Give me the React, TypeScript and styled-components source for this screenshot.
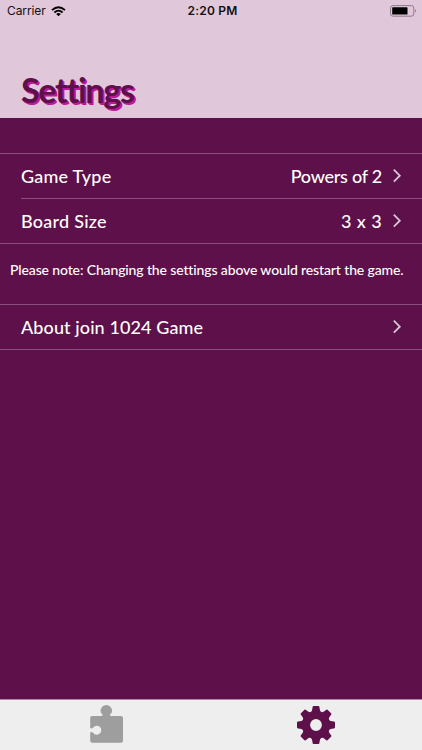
import React from "react";
import styled, { createGlobalStyle } from "styled-components";

const GlobalStyle = createGlobalStyle`
  * { box-sizing: border-box; }
  body { margin: 0; background: #5d1049; }
`;

const Screen = styled.div`
  width: 100%;
  height: 750px;
  display: flex;
  flex-direction: column;
  overflow: hidden;
  background: #5d1049;
  color: #fff;
  font-family: Lato, sans-serif;
  font-weight: 500;
`;

const Header = styled.header`
  height: 118px;
  flex: none;
  display: flex;
  flex-direction: column;
  background: #e1c7da;
`;

const StatusBar = styled.div`
  height: 22px;
  display: grid;
  grid-template-columns: 1fr auto 1fr;
  align-items: center;
  padding: 0 5px 0 7px;
  color: #111;
  font: 400 12px/22px Inter, sans-serif;
`;

const Carrier = styled.div`
  display: flex;
  align-items: center;
  gap: 5px;
  letter-spacing: -0.1px;
`;

const Clock = styled.time`
  font-weight: 600;
  letter-spacing: 0.2px;
  padding-left: 1px;
`;

const Battery = styled.div`
  display: flex;
  justify-content: flex-end;
`;

const Title = styled.h1`
  margin: 46px 0 0 21px;
  font-size: 34px;
  line-height: 44px;
  font-weight: 700;
  letter-spacing: -1.25px;
  color: #5d1049;
  text-shadow: 1px 1px 0 #c0189c, 2px 2px 0 #c0189c;
`;

const Main = styled.main`
  flex: 1;
  padding-top: 35px;
`;

const Group = styled.section`
  border-top: 1px solid #874f79;
  border-bottom: 1px solid #874f79;
`;

const Row = styled.div<{ $divided?: boolean }>`
  height: ${(p) => (p.$divided ? 45 : 44)}px;
  margin-left: 21px;
  padding-right: 20px;
  display: flex;
  align-items: center;
  border-bottom: ${(p) => (p.$divided ? "1px solid #874f79" : "none")};
  font-size: 18px;
  line-height: 24px;
`;

const Label = styled.span<{ $tracking: number }>`
  flex: 1;
  letter-spacing: ${(p) => p.$tracking}px;
`;

const Value = styled.span<{ $tracking: number }>`
  margin-right: 10px;
  letter-spacing: ${(p) => p.$tracking}px;
`;

const Note = styled.p`
  margin: 0;
  height: 60px;
  padding: 16px 0 0 10px;
  font-size: 14px;
  line-height: 20px;
  letter-spacing: -0.13px;
  white-space: nowrap;
`;

const TabBar = styled.nav`
  height: 51px;
  flex: none;
  display: grid;
  grid-template-columns: 1fr 1fr;
  background: #eeeeee;
  border-top: 1px solid #a98a9f;
`;

const Tab = styled.div<{ $nudge: number }>`
  display: flex;
  justify-content: center;
  padding-top: 5px;
  padding-left: ${(p) => Math.max(p.$nudge, 0) * 2}px;
  padding-right: ${(p) => Math.max(-p.$nudge, 0) * 2}px;
`;

const Chevron = () => (
  <svg width="10" height="16" viewBox="0 0 10 16" fill="none">
    <path d="M1.8 1.7L7.8 7.7L1.8 13.7" stroke="#d8c7d5" strokeWidth="1.8" />
  </svg>
);

const Wifi = () => (
  <svg width="15" height="11" viewBox="0 0 15 11" fill="none" stroke="#000">
    <path d="M1 4.1Q7.5-1.8 14 4.1" strokeWidth="1.9" />
    <path d="M3.4 6.5Q7.5 2.8 11.6 6.5" strokeWidth="1.8" />
    <path d="M5.2 8Q7.5 6.2 9.8 8L7.5 10.3Z" fill="#000" stroke="none" />
  </svg>
);

const BatteryIcon = () => (
  <svg width="28" height="12" viewBox="0 0 28 12">
    <rect x="1.5" y="0.6" width="23.3" height="10.6" rx="2.5" fill="none" stroke="#8e7b89" />
    <rect x="3.2" y="2.2" width="15.3" height="7.4" rx="0.7" fill="#000" />
    <path d="M26 4.2Q28 5.9 26 7.6Z" fill="#8e7b89" />
  </svg>
);

const Puzzle = () => (
  <svg width="36" height="39" viewBox="0 0 36 39">
    <path
      fill="#9e9e9e"
      d="M3 11H12.5Q14.2 11 13.6 9.6Q11.5 8.3 11.5 5.8A5.8 5.8 0 0 1 23.1 5.8Q23.1 8.3 21 9.6Q20.4 11 22.1 11H32Q34 11 34 13V35.5Q34 37.7 32 37.7H3.5Q1.2 37.7 1.2 35.5V27.4Q2.7 26.5 4 27.6A4.5 4.5 0 1 0 4 22.8Q2.7 23.9 1.2 23V13Q1.2 11 3 11Z"
    />
  </svg>
);

const teeth = [0, 45, 90, 135, 180, 225, 270, 315];

const Gear = () => (
  <svg width="40" height="40" viewBox="-20 -20 40 40">
    <circle r="10" fill="none" stroke="#5d1049" strokeWidth="8.2" />
    {teeth.map((angle) => (
      <path
        key={angle}
        transform={`rotate(${angle})`}
        d="M-5.4-12.5Q-4-13.5-3.7-16L-3.4-18Q-3.3-19-2.3-19H2.3Q3.3-19 3.4-18L3.7-16Q4-13.5 5.4-12.5Z"
        fill="#5d1049"
      />
    ))}
  </svg>
);

export default function App() {
  return (
    <Screen>
      <GlobalStyle />
      <Header>
        <StatusBar>
          <Carrier>Carrier <Wifi /></Carrier>
          <Clock>2:20 PM</Clock>
          <Battery><BatteryIcon /></Battery>
        </StatusBar>
        <Title>Settings</Title>
      </Header>
      <Main>
        <Group>
          <Row $divided>
            <Label $tracking={0.2}>Game Type</Label>
            <Value $tracking={-0.25}>Powers of 2</Value>
            <Chevron />
          </Row>
          <Row>
            <Label $tracking={0.25}>Board Size</Label>
            <Value $tracking={0.4}>3 x 3</Value>
            <Chevron />
          </Row>
        </Group>
        <Note>Please note: Changing the settings above would restart the game.</Note>
        <Group>
          <Row>
            <Label $tracking={0.1}>About join 1024 Game</Label>
            <Chevron />
          </Row>
        </Group>
      </Main>
      <TabBar>
        <Tab $nudge={1}><Puzzle /></Tab>
        <Tab $nudge={-1}><Gear /></Tab>
      </TabBar>
    </Screen>
  );
}
